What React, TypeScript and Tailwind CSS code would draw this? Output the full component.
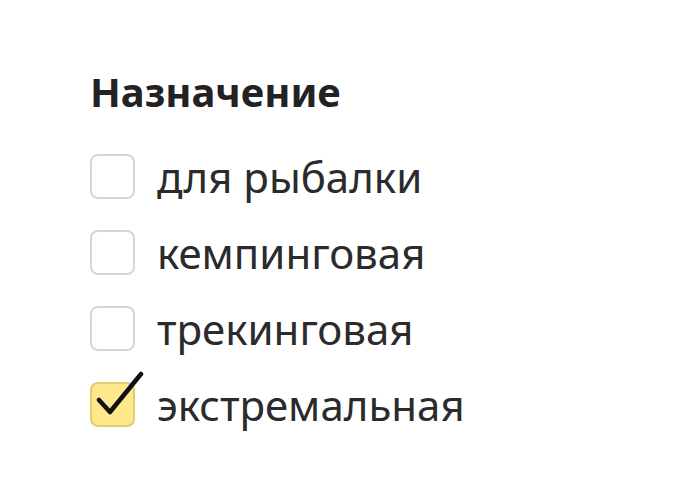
import { useState } from "react";

const options = ["для рыбалки", "кемпинговая", "трекинговая", "экстремальная"];

function Checkbox({ checked }: { checked: boolean }) {
  return (
    <span
      className={[
        "relative flex h-[45px] w-[45px] shrink-0 rounded-[8px] border-2",
        checked ? "border-[#e2cd6e] bg-[#fde98c]" : "border-[#d6d6d6] bg-white",
      ].join(" ")}
    >
      {checked && (
        <svg
          className="absolute left-[4px] top-[-14px]"
          width="48"
          height="52"
          viewBox="0 0 48 52"
          fill="none"
        >
          <path
            d="M3 30 L14 42 L45 4"
            stroke="#111"
            strokeWidth="4.5"
            strokeLinecap="round"
            strokeLinejoin="round"
          />
        </svg>
      )}
    </span>
  );
}

export default function App() {
  const [selected, setSelected] = useState<string[]>(["экстремальная"]);

  const toggle = (name: string) =>
    setSelected((s) => (s.includes(name) ? s.filter((x) => x !== name) : [...s, name]));

  return (
    <div
      className="h-[491px] w-[700px] bg-white pl-[90px] pt-[68px] text-[#2b2b2b]"
      style={{ fontFamily: '"Noto Sans", "Open Sans", sans-serif' }}
    >
      <h3 className="text-[40px] font-bold leading-[48px] text-[#222]">Назначение</h3>
      <div className="mt-[38px] flex flex-col gap-[31px]">
        {options.map((name) => (
          <label
            key={name}
            className="flex cursor-pointer items-center gap-[22px]"
            onClick={() => toggle(name)}
          >
            <Checkbox checked={selected.includes(name)} />
            <span className="text-[42px] leading-[45px]">{name}</span>
          </label>
        ))}
      </div>
    </div>
  );
}
